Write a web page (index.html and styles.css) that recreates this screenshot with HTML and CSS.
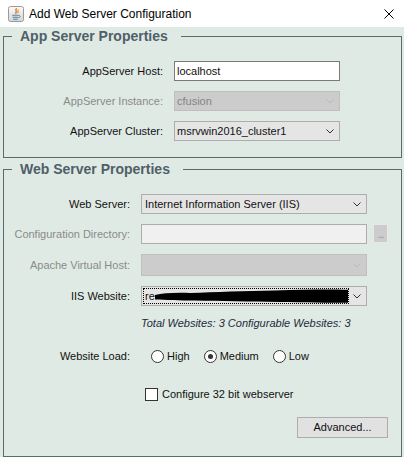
FILE: index.html
```html
<!DOCTYPE html>
<html lang="en">
<head>
<meta charset="utf-8">
<title>Add Web Server Configuration</title>
<link rel="stylesheet" href="styles.css">
</head>
<body>
<div class="window">
  <div class="titlebar">
    <svg class="app-icon" width="16" height="16" viewBox="0 0 16 16">
      <defs>
        <linearGradient id="ig" x1="0" y1="0" x2="0" y2="1">
          <stop offset="0" stop-color="#fafafa"/>
          <stop offset="1" stop-color="#d6d6d6"/>
        </linearGradient>
      </defs>
      <rect x="0.5" y="0.5" width="15" height="15" rx="2" fill="url(#ig)" stroke="#9a9a9a"/>
      <path d="M8.6 2.2 C6.4 4.3 9.8 5.4 7.4 7.8" stroke="#e76f00" fill="none" stroke-width="1.3"/>
      <path d="M10.4 3.6 C9.2 5 10.8 5.6 9.6 7.2" stroke="#e76f00" fill="none" stroke-width="1"/>
      <path d="M4.2 9.2 H10.6 M4.6 11.2 H10.2 M5.2 13.2 H9.8" stroke="#5382a1" stroke-width="1.1"/>
      <path d="M10.6 9.4 C12.8 9.4 12.8 11.6 10.4 11.6" stroke="#5382a1" fill="none" stroke-width="1"/>
    </svg>
    <span class="title">Add Web Server Configuration</span>
    <svg class="close" width="10" height="10" viewBox="0 0 10 10">
      <path d="M0.5 0.5 L9.5 9.5 M9.5 0.5 L0.5 9.5" stroke="#000" stroke-width="1"/>
    </svg>
  </div>

  <div class="content">
    <fieldset class="group">
      <legend>App Server Properties</legend>
      <div class="rows-app">
        <span class="label">AppServer Host:</span>
        <div class="field text">localhost</div>

        <span class="label disabled">AppServer Instance:</span>
        <div class="field combo off">
          <span>cfusion</span>
          <svg class="chev" width="8" height="5" viewBox="0 0 8 5"><polyline points="0.5,0.5 4,4 7.5,0.5" fill="none" stroke="#b8b8b8"/></svg>
        </div>

        <span class="label">AppServer Cluster:</span>
        <div class="field combo">
          <span>msrvwin2016_cluster1</span>
          <svg class="chev" width="8" height="5" viewBox="0 0 8 5"><polyline points="0.5,0.5 4,4 7.5,0.5" fill="none" stroke="#333"/></svg>
        </div>
      </div>
    </fieldset>

    <fieldset class="group">
      <legend>Web Server Properties</legend>
      <div class="rows-web">
        <span class="label">Web Server:</span>
        <div class="field combo wide">
          <span class="pad3">Internet Information Server (IIS)</span>
          <svg class="chev" width="8" height="5" viewBox="0 0 8 5"><polyline points="0.5,0.5 4,4 7.5,0.5" fill="none" stroke="#333"/></svg>
        </div>

        <span class="label disabled">Configuration Directory:</span>
        <div class="field dir wide"></div>
        <div class="browse">...</div>

        <span class="label disabled">Apache Virtual Host:</span>
        <div class="field combo off wide tall">
          <svg class="chev" width="8" height="5" viewBox="0 0 8 5"><polyline points="0.5,0.5 4,4 7.5,0.5" fill="none" stroke="#b8b8b8"/></svg>
        </div>

        <span class="label">IIS Website:</span>
        <div class="field combo wide focus">
          <span class="ring">
            <span class="iis-text">re</span>
            <svg class="redact" width="194" height="14" viewBox="0 0 194 14" preserveAspectRatio="none">
              <path d="M0,6 C8,4 20,3.5 35,4 C60,3 90,2 120,1.5 C150,0.5 175,0.3 194,0.8 L194,13.8 C175,13.8 150,13.5 125,13 C95,12.5 65,12 40,11.5 C25,11.5 10,11 0,10.5 Z" fill="#000"/>
            </svg>
          </span>
          <svg class="chev" width="8" height="5" viewBox="0 0 8 5"><polyline points="0.5,0.5 4,4 7.5,0.5" fill="none" stroke="#333"/></svg>
        </div>

        <span class="info">Total Websites: 3 Configurable Websites: 3</span>

        <span class="label load-label">Website Load:</span>
        <div class="radios">
          <span class="radio"><span class="dot"></span>High</span>
          <span class="radio"><span class="dot on"></span>Medium</span>
          <span class="radio"><span class="dot"></span>Low</span>
        </div>

        <div class="check"><span class="box"></span>Configure 32 bit webserver</div>

        <div class="button">Advanced...</div>
      </div>
    </fieldset>
  </div>
</div>
</body>
</html>
```

FILE: styles.css
```css
* { box-sizing: border-box; }
html, body { margin: 0; padding: 0; }
body {
  width: 404px;
  height: 457px;
  overflow: hidden;
  background: #e0eae4;
  font-family: "Liberation Sans", Arial, sans-serif;
  font-size: 11px;
  color: #111;
}
.titlebar {
  height: 27px;
  background: #fff;
  display: flex;
  align-items: center;
}
.app-icon { margin-left: 8px; flex: none; }
.title { margin-left: 5px; font-size: 12px; color: #000; flex: 1; }
.close { margin-right: 10px; flex: none; }

.content { padding: 1px 2px 0 3px; }
.group {
  margin: 0;
  padding: 0;
  border: 1px solid #5a6c66;
  min-width: 0;
}
.group + .group { margin-top: 3px; }
.group legend {
  margin-left: 8px;
  padding: 0 13px 0 8px;
  font-weight: bold;
  font-size: 14px;
  line-height: 16px;
  color: #4e6068;
}

.label {
  text-align: right;
  align-self: center;
  white-space: nowrap;
  color: #111;
}
.label.disabled { color: #8a8a8a; }

.rows-app {
  display: grid;
  grid-template-columns: 159px 166px;
  column-gap: 11px;
  row-gap: 10px;
  grid-auto-rows: 20px;
  padding: 17px 0 16px 0;
}

.field {
  height: 20px;
  border: 1px solid #7a7a7a;
  background: #fff;
  display: flex;
  align-items: center;
  padding-left: 2px;
  line-height: 18px;
  white-space: nowrap;
  overflow: hidden;
}
.combo { background: #e5e5e5; border-color: #adadad; }
.combo.off { background: #cccccc; border-color: #bfbfbf; color: #858585; }
.chev { margin-left: auto; margin-right: 5px; flex: none; }
.pad3 { padding-left: 1px; }

.rows-web {
  display: grid;
  grid-template-columns: 137px 232px 15px;
  row-gap: 10px;
  padding: 17px 0 18px 0;
}
.rows-web .label { grid-column: 1; padding-right: 11px; }
.wide { width: 226px; grid-column: 2; }
.tall { height: 22px; }
.dir { background: #f0f0f0; border-color: #adadad; }
.browse {
  grid-column: 3;
  height: 19px;
  background: #cccccc;
  border: 1px solid #e8e8e8;
  color: #8593a8;
  font-size: 10px;
  line-height: 19px;
  text-align: center;
  letter-spacing: -1px;
}
.focus { padding-left: 1px; }
.ring {
  display: flex;
  align-items: center;
  width: 206px;
  height: 16px;
  border: 1px dotted #000;
  padding-left: 1px;
  overflow: hidden;
}
.iis-text { flex: none; }
.redact { flex: none; }

.info {
  grid-column: 2 / 4;
  font-style: italic;
  line-height: 14px;
  color: #1c2a3c;
}
.rows-web .load-label { margin-top: 8px; height: 16px; line-height: 16px; }
.radios {
  grid-column: 2 / 4;
  margin-top: 8px;
  height: 16px;
  display: flex;
  align-items: center;
  gap: 14px;
  padding-left: 10px;
}
.radio { display: inline-flex; align-items: center; gap: 3px; }
.dot {
  width: 13px;
  height: 13px;
  border-radius: 50%;
  border: 1px solid #333;
  background: #fff;
  display: flex;
  align-items: center;
  justify-content: center;
}
.dot.on::after {
  content: "";
  width: 5px;
  height: 5px;
  border-radius: 50%;
  background: #333;
}
.check {
  grid-column: 2 / 4;
  margin-top: 12px;
  height: 16px;
  display: flex;
  align-items: center;
  gap: 4px;
  padding-left: 4px;
}
.box {
  width: 13px;
  height: 13px;
  border: 1px solid #333;
  background: #fff;
}
.button {
  grid-column: 2 / 4;
  justify-self: end;
  margin-top: 5px;
  width: 91px;
  height: 21px;
  background: #e1e1e1;
  border: 1px solid #adadad;
  text-align: center;
  line-height: 19px;
}
```
